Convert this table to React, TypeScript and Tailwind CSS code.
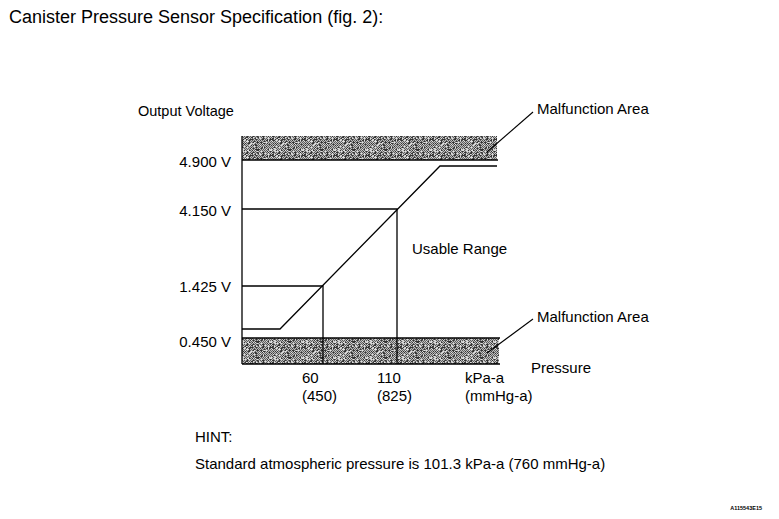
import React from "react";

// pseudo-random dither used for the shaded "malfunction" bands
const NOISE_W = 32;
const NOISE_H = 16;
const noise: { x: number; y: number; c: string }[] = (() => {
  let seed = 12345;
  const rnd = () => {
    seed = (seed * 1103515245 + 12345) & 0x7fffffff;
    return seed / 0x7fffffff;
  };
  const out: { x: number; y: number; c: string }[] = [];
  for (let y = 0; y < NOISE_H; y++) {
    for (let x = 0; x < NOISE_W; x++) {
      const r = rnd();
      const checker = (x + y) % 2 === 0;
      let c = checker ? "#5e5e5e" : "#bdbdbd";
      if (r < 0.2) c = "#333333";
      else if (r > 0.88) c = "#e0e0e0";
      out.push({ x, y, c });
    }
  }
  return out;
})();

function Chart() {
  return (
    <svg
      width={779}
      height={382}
      viewBox="0 38 779 382"
      className="block"
      style={{ fontFamily: "'Liberation Sans', Arial, sans-serif" }}
    >
      <defs>
        <pattern id="dither" x={0} y={0} width={NOISE_W} height={NOISE_H} patternUnits="userSpaceOnUse">
          {noise.map((p) => (
            <rect key={`${p.x}-${p.y}`} x={p.x} y={p.y} width={1} height={1} fill={p.c} shapeRendering="crispEdges" />
          ))}
        </pattern>
      </defs>

      {/* shaded bands */}
      <rect x={242} y={136} width={255} height={24} fill="url(#dither)" />
      <rect x={242} y={338} width={257} height={26} fill="url(#dither)" />

      <g stroke="black" strokeWidth={1.3} fill="none">
        {/* axis + band edges */}
        <line x1={242} y1={136} x2={242} y2={364} />
        <line x1={242} y1={160} x2={498} y2={160} />
        <line x1={242} y1={338} x2={500} y2={338} />
        <line x1={242} y1={364} x2={500} y2={364} />

        {/* characteristic */}
        <polyline points="242,329 280,329 440,166 497,166" />

        {/* reference lines */}
        <polyline points="242,209 397,209 397,364" />
        <polyline points="242,286 323,286 323,364" />

        {/* leaders */}
        <line x1={533} y1={112} x2={487} y2={152} strokeWidth={1.1} />
        <line x1={533} y1={319} x2={487} y2={353} strokeWidth={1.1} />
      </g>

      <g className="fill-black" fontSize={15}>
        <text x={138} y={116} fontSize={14.5}>Output Voltage</text>
        <text x={231} y={167} textAnchor="end">4.900 V</text>
        <text x={231} y={216} textAnchor="end">4.150 V</text>
        <text x={231} y={292} textAnchor="end">1.425 V</text>
        <text x={231} y={347} textAnchor="end">0.450 V</text>

        <text x={412} y={254}>Usable Range</text>

        <text x={537} y={114}>Malfunction Area</text>
        <text x={537} y={322}>Malfunction Area</text>
        <text x={531} y={373}>Pressure</text>

        <text x={302} y={383}>60</text>
        <text x={302} y={401}>(450)</text>
        <text x={377} y={383}>110</text>
        <text x={377} y={401}>(825)</text>
        <text x={465} y={383}>kPa-a</text>
        <text x={465} y={401}>(mmHg-a)</text>
      </g>
    </svg>
  );
}

export default function App() {
  return (
    <main className="w-[779px] h-[519px] bg-white text-black font-['Liberation_Sans',Arial,sans-serif] overflow-hidden flex flex-col">
      <div className="h-[38px] pl-[9px] pt-[8px] text-[18px] leading-[18px]">
        Canister Pressure Sensor Specification (fig. 2):
      </div>

      <Chart />

      <div className="pl-[195px] pt-[9px] text-[15px] leading-[15px]">
        <p>HINT:</p>
        <p className="mt-[12px]">Standard atmospheric pressure is 101.3 kPa-a (760 mmHg-a)</p>
      </div>

      <div className="mt-[34px] pr-[17px] flex justify-end">
        <span className="text-[5.5px] leading-[6px] font-bold">A115543E15</span>
      </div>
    </main>
  );
}
